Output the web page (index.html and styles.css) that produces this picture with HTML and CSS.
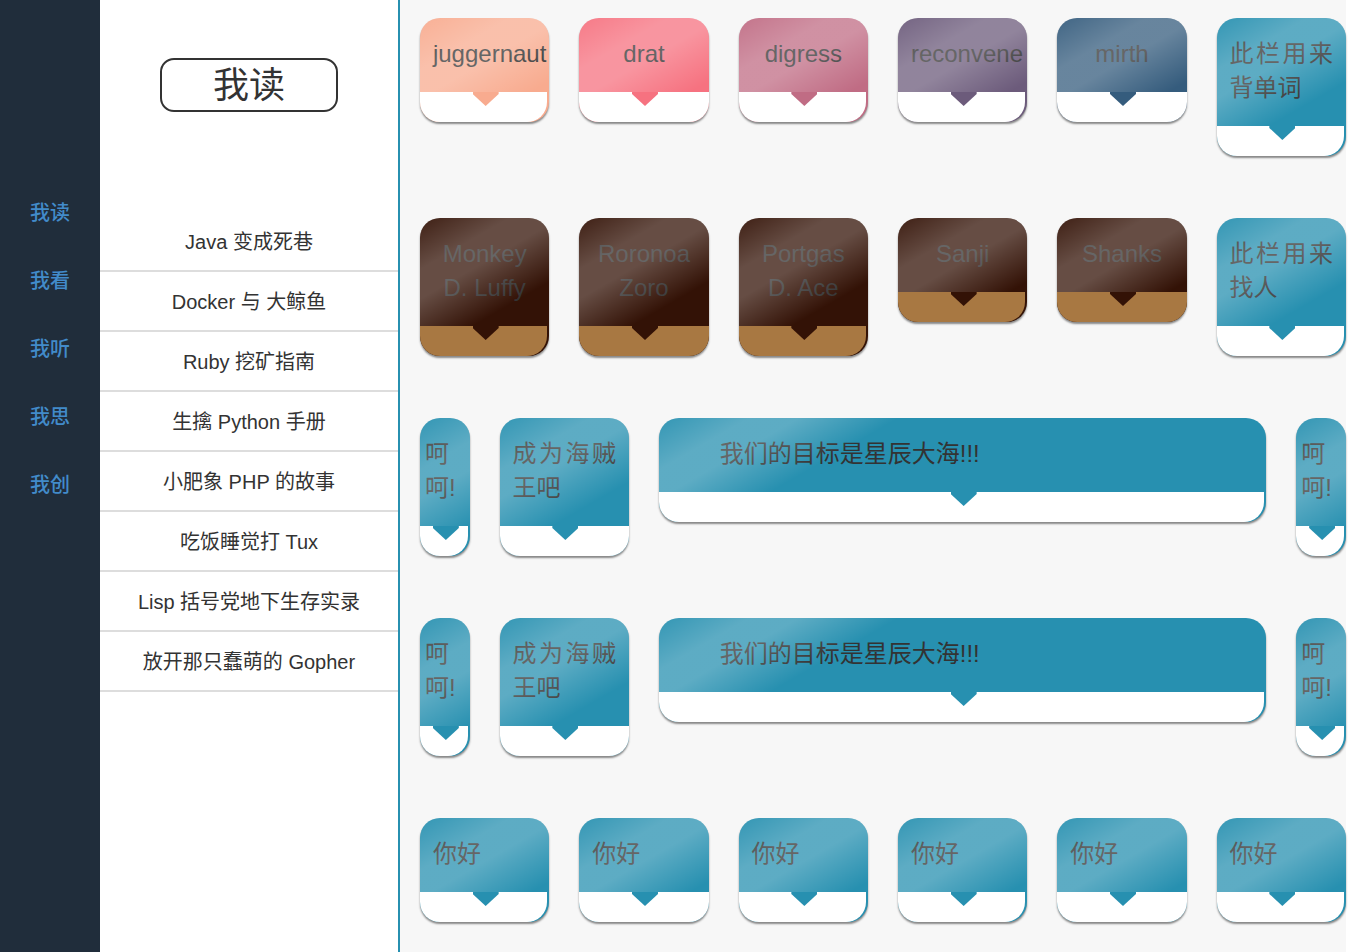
FILE: index.html
```
<!DOCTYPE html>
<html lang="zh-CN">
<head>
  <meta charset="utf-8">
  <meta name="viewport" content="width=device-width, initial-scale=1">
  <title>我读</title>
  <link rel="stylesheet" href="styles.css">
</head>
<body>
  <div class="layout">
    <nav class="sidebar">
      <a class="sidebar-link" href="#read">我读</a>
      <a class="sidebar-link" href="#watch">我看</a>
      <a class="sidebar-link" href="#listen">我听</a>
      <a class="sidebar-link" href="#think">我思</a>
      <a class="sidebar-link" href="#create">我创</a>
    </nav>

    <section class="articles">
      <h1 class="articles-title">我读</h1>
      <ul class="articles-list">
        <li><a class="article-link" href="#java">Java 变成死巷</a></li>
        <li><a class="article-link" href="#docker">Docker 与 大鲸鱼</a></li>
        <li><a class="article-link" href="#ruby">Ruby 挖矿指南</a></li>
        <li><a class="article-link" href="#python">生擒 Python 手册</a></li>
        <li><a class="article-link" href="#php">小肥象 PHP 的故事</a></li>
        <li><a class="article-link" href="#tux">吃饭睡觉打 Tux</a></li>
        <li><a class="article-link" href="#lisp">Lisp 括号党地下生存实录</a></li>
        <li><a class="article-link" href="#gopher">放开那只蠢萌的 Gopher</a></li>
      </ul>
    </section>

    <main class="board">
      <article class="card word peach edge"><p class="card-text">juggernaut</p></article>
      <article class="card word coral"><p class="card-text">drat</p></article>
      <article class="card word rose edge"><p class="card-text">digress</p></article>
      <article class="card word plum edge"><p class="card-text">reconvene</p></article>
      <article class="card word navy"><p class="card-text">mirth</p></article>
      <article class="card edge"><p class="card-text">此栏用来背单词</p></article>

      <article class="card word wood edge"><p class="card-text">Monkey D. Luffy</p></article>
      <article class="card word wood"><p class="card-text">Roronoa Zoro</p></article>
      <article class="card word wood edge"><p class="card-text">Portgas D. Ace</p></article>
      <article class="card word wood edge"><p class="card-text">Sanji</p></article>
      <article class="card word wood"><p class="card-text">Shanks</p></article>
      <article class="card edge"><p class="card-text">此栏用来找人</p></article>

      <article class="card narrow edge"><p class="card-text">呵呵!</p></article>
      <article class="card"><p class="card-text">成为海贼王吧</p></article>
      <article class="card wide edge"><p class="card-text">我们的目标是星辰大海!!!</p></article>
      <article class="card narrow edge"><p class="card-text">呵呵!</p></article>

      <article class="card narrow edge"><p class="card-text">呵呵!</p></article>
      <article class="card"><p class="card-text">成为海贼王吧</p></article>
      <article class="card wide edge"><p class="card-text">我们的目标是星辰大海!!!</p></article>
      <article class="card narrow edge"><p class="card-text">呵呵!</p></article>

      <article class="card edge"><p class="card-text">你好</p></article>
      <article class="card"><p class="card-text">你好</p></article>
      <article class="card edge"><p class="card-text">你好</p></article>
      <article class="card edge"><p class="card-text">你好</p></article>
      <article class="card"><p class="card-text">你好</p></article>
      <article class="card edge"><p class="card-text">你好</p></article>
    </main>
  </div>
</body>
</html>
```
FILE: styles.css
```
* {
  box-sizing: border-box;
}

body {
  margin: 0;
  background: #fff;
  color: #333;
  font-family: "Liberation Sans", "Noto Sans CJK SC", sans-serif;
}

.layout {
  display: grid;
  grid-template-columns: 100px 300px 1fr;
  min-height: 100vh;
  padding-right: 6px;
}

/* Sidebar */

.sidebar {
  padding-top: 179px;
  background: #202d3b;
}

.sidebar-link {
  display: block;
  color: #428bca;
  font-size: 20px;
  font-weight: 500;
  line-height: 68px;
  text-align: center;
  text-decoration: none;
}

/* Article list */

.articles {
  padding-top: 58px;
  border-right: 2px solid #2790b0;
}

.articles-title {
  width: 60%;
  margin: 0 auto 100px;
  padding-top: 2px;
  border: 2px solid #333;
  border-radius: 14px;
  font-size: 36px;
  font-weight: 400;
  line-height: 48px;
  text-align: center;
}

.articles-list {
  margin: 0;
  padding: 0;
  list-style: none;
}

.article-link {
  display: block;
  padding-top: 2px;
  border-bottom: 2px solid #ddd;
  color: #333;
  font-size: 20px;
  line-height: 56px;
  text-align: center;
  text-decoration: none;
}

/* Board of cards */

.board {
  display: grid;
  grid-template-columns: repeat(12, minmax(0, 1fr));
  grid-template-rows: repeat(4, 200px) auto;
  column-gap: 30px;
  align-items: start;
  padding: 18px 0 0 20px;
  background: #f7f7f7;
}

.card {
  --tone: #2790b0;
  --base: #fff;
  grid-column: span 2;
  overflow: hidden;
  border-radius: 20px;
  background: var(--tone);
  box-shadow: 0 2px 2px rgba(0, 0, 0, 0.45);
}

.narrow { grid-column: span 1; }
.wide { grid-column: span 8; }

.peach { --tone: #f8ab8f; }
.coral { --tone: #f67280; }
.rose { --tone: #c06c84; }
.plum { --tone: #6c5b7b; }
.navy { --tone: #355c7d; }
.wood { --tone: #331206; --base: #a87842; }

.card-text {
  position: relative;
  margin: 0;
  padding: 19px 10% 21px;
  font-size: 24px;
  line-height: 34px;
  text-align: justify;
}

.word .card-text {
  text-align: center;
}

/* Sheen across the text area */
.card-text::after {
  content: "";
  position: absolute;
  inset: 0;
  background: linear-gradient(
    150deg,
    rgba(255, 255, 255, 0.06) 0,
    rgba(255, 255, 255, 0.25) 45px,
    rgba(255, 255, 255, 0.25) 70px,
    rgba(255, 255, 255, 0) 120px
  );
}

/* Footer strip with the pointer hanging from the text area */
.card::after {
  content: "";
  display: block;
  height: 30px;
  background: var(--base);
}

.edge::after {
  margin-right: 2px;
  border-bottom-right-radius: 20px;
}

.card-text::before {
  content: "";
  position: absolute;
  top: 100%;
  left: 50%;
  width: 26px;
  height: 14px;
  margin-left: -12px;
  background: var(--tone);
  clip-path: polygon(0 0, 100% 0, 100% 2px, 50% 100%, 0 2px);
}
```
